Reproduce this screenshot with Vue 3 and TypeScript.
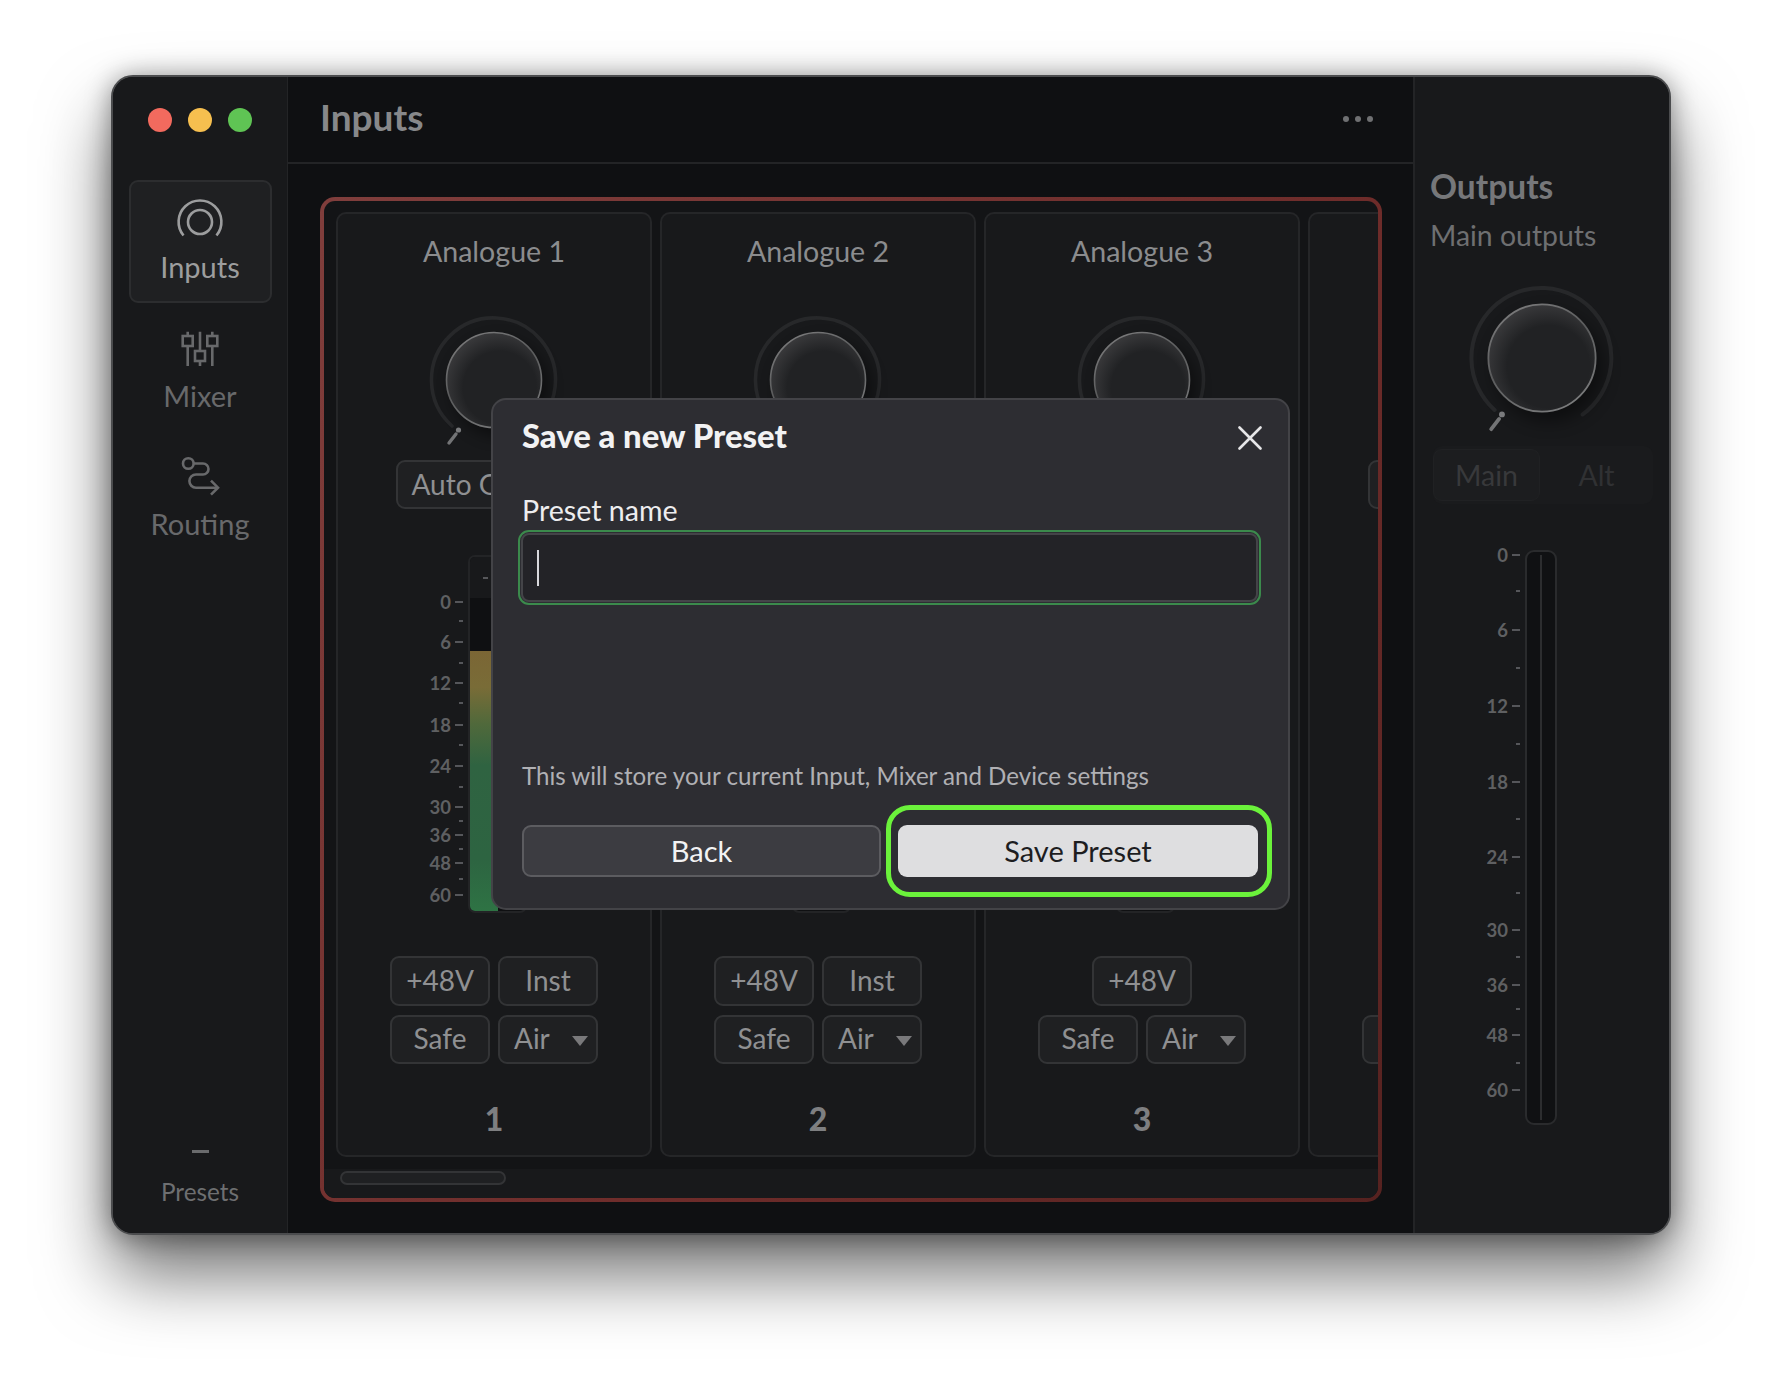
<script setup lang="ts">
interface Tick { y: number; label?: string }
interface Channel { name: string; num: number; inst: boolean; fill: boolean }

const channels: Channel[] = [
  { name: 'Analogue 1', num: 1, inst: true, fill: true },
  { name: 'Analogue 2', num: 2, inst: true, fill: false },
  { name: 'Analogue 3', num: 3, inst: false, fill: false },
  { name: 'Analogue 4', num: 4, inst: false, fill: false }
]

const channelTicks: Tick[] = [
  { y: 47, label: '0' }, { y: 66 }, { y: 87, label: '6' }, { y: 108 },
  { y: 128, label: '12' }, { y: 148 }, { y: 170, label: '18' }, { y: 190 },
  { y: 211, label: '24' }, { y: 232 }, { y: 252, label: '30' }, { y: 266 },
  { y: 280, label: '36' }, { y: 294 }, { y: 308, label: '48' }, { y: 324 },
  { y: 340, label: '60' }
]

const outputTicks: Tick[] = [
  { y: 5, label: '0' }, { y: 41 }, { y: 80, label: '6' }, { y: 118 },
  { y: 156, label: '12' }, { y: 194 }, { y: 232, label: '18' }, { y: 269 },
  { y: 307, label: '24' }, { y: 343 }, { y: 380, label: '30' }, { y: 407 },
  { y: 435, label: '36' }, { y: 459 }, { y: 485, label: '48' }, { y: 513 },
  { y: 540, label: '60' }
]
</script>

<template>
  <div class="page">
    <svg class="defs" width="0" height="0" aria-hidden="true">
      <defs>
        <radialGradient id="knobFill" cx="0.56" cy="0.58" r="0.62">
          <stop offset="0.62" stop-color="#212224" />
          <stop offset="1" stop-color="#3c3c3e" />
        </radialGradient>
        <linearGradient id="knobEdge" x1="0.2" y1="0" x2="0.75" y2="1">
          <stop offset="0" stop-color="#7c7c7d" />
          <stop offset="0.45" stop-color="#5a5b5c" />
          <stop offset="1" stop-color="#7c7d7e" />
        </linearGradient>
        <filter id="knobBlur" x="-40%" y="-40%" width="180%" height="180%">
          <feGaussianBlur stdDeviation="8" />
        </filter>
      </defs>
    </svg>

    <div class="window">
      <aside class="sidebar">
        <div class="lights">
          <span class="light red"></span>
          <span class="light yellow"></span>
          <span class="light green"></span>
        </div>
        <nav class="nav">
          <div class="nav-item active">
            <svg class="nav-icon" viewBox="0 0 48 48" fill="none">
              <circle cx="24" cy="26" r="12" />
              <path d="M7.5 39.5A21.4 21.4 0 1 1 40.5 39.5" />
            </svg>
            <span>Inputs</span>
          </div>
          <div class="nav-item">
            <svg class="nav-icon" viewBox="0 0 48 48" fill="none">
              <path d="M11.7 6.7V11M11.7 21V41M24 6.7V26M24 36V41M36.3 6.7V11M36.3 21V41" />
              <rect x="6.7" y="11" width="10" height="10" />
              <rect x="19" y="26" width="10" height="10" />
              <rect x="31.3" y="11" width="10" height="10" />
            </svg>
            <span>Mixer</span>
          </div>
          <div class="nav-item">
            <svg class="nav-icon" viewBox="0 0 48 48" fill="none">
              <circle cx="12.3" cy="10.5" r="5.3" />
              <path d="M17.6 10.5H27a5.5 5.5 0 0 1 0 11H20a6.6 6.6 0 0 0 0 13.2H42" />
              <path d="M35 27.7L42 34.7L35 41.7" />
            </svg>
            <span>Routing</span>
          </div>
        </nav>
        <div class="presets">
          <span class="presets-dash"></span>
          <span>Presets</span>
        </div>
      </aside>

      <main class="main">
        <header class="main-head">
          <h1>Inputs</h1>
          <div class="dots"><i></i><i></i><i></i></div>
        </header>
        <div class="main-body">
          <section class="frame">
            <div class="strip">
              <article v-for="ch in channels" :key="ch.num" class="channel">
                <div class="ch-title">{{ ch.name }}</div>
                <svg class="knob" viewBox="0 0 140 140" fill="none">
                  <path class="ring" d="M28 116A62 62 0 1 1 106 120" />
                  <circle cx="76" cy="78" r="48" fill="#000" opacity="0.45" filter="url(#knobBlur)" />
                  <circle cx="70" cy="70" r="47.5" fill="url(#knobFill)" stroke="url(#knobEdge)" stroke-width="1.6" />
                  <path class="tick-mark" d="M25 133L32 124" />
                  <circle cx="34.5" cy="120" r="2.6" fill="#7a7b7d" />
                </svg>
                <button class="btn auto">Auto Gain</button>
                <div class="meter">
                  <div class="scale">
                    <div
                      v-for="t in channelTicks"
                      :key="t.y"
                      class="scale-row"
                      :style="{ top: t.y + 'px' }"
                    >
                      <span v-if="t.label" class="scale-label">{{ t.label }}</span>
                      <span class="scale-dash" :class="{ minor: !t.label }"></span>
                    </div>
                  </div>
                  <div class="meter-box">
                    <div class="readout"><span></span></div>
                    <div class="well">
                      <div v-if="ch.fill" class="level"></div>
                    </div>
                  </div>
                </div>
                <div class="btn-row first">
                  <button class="btn small">+48V</button>
                  <button v-if="ch.inst" class="btn small">Inst</button>
                </div>
                <div class="btn-row">
                  <button class="btn small">Safe</button>
                  <button class="btn small air">Air<i class="caret"></i></button>
                </div>
                <div class="ch-num">{{ ch.num }}</div>
              </article>
            </div>
            <div class="scroll-band"><div class="scroll-thumb"></div></div>
          </section>
        </div>
      </main>

      <aside class="outputs">
        <h2>Outputs</h2>
        <div class="out-sub">Main outputs</div>
        <svg class="knob big" viewBox="0 0 140 140" fill="none">
          <path class="ring" d="M28 116A62 62 0 1 1 106 120" />
          <circle cx="76" cy="78" r="48" fill="#000" opacity="0.45" filter="url(#knobBlur)" />
          <circle cx="70" cy="70" r="47.5" fill="url(#knobFill)" stroke="url(#knobEdge)" stroke-width="1.6" />
          <path class="tick-mark" d="M25 133L32 124" />
          <circle cx="34.5" cy="120" r="2.6" fill="#7a7b7d" />
        </svg>
        <div class="segment">
          <div class="seg on">Main</div>
          <div class="seg">Alt</div>
        </div>
        <div class="out-meter">
          <div class="scale wide">
            <div
              v-for="t in outputTicks"
              :key="t.y"
              class="scale-row"
              :style="{ top: t.y + 'px' }"
            >
              <span v-if="t.label" class="scale-label">{{ t.label }}</span>
              <span class="scale-dash" :class="{ minor: !t.label }"></span>
            </div>
          </div>
          <div class="out-box"><span></span></div>
        </div>
      </aside>

      <div class="modal">
        <div class="modal-head">
          <h3>Save a new Preset</h3>
          <svg class="close" viewBox="0 0 24 24" fill="none">
            <path d="M1.5 1.5L22.5 22.5M22.5 1.5L1.5 22.5" />
          </svg>
        </div>
        <div class="field-label">Preset name</div>
        <div class="field-focus">
          <div class="field"><span class="text-caret"></span></div>
        </div>
        <p class="note">This will store your current Input, Mixer and Device settings</p>
        <div class="actions">
          <button class="act back">Back</button>
          <button class="act save">Save Preset</button>
        </div>
      </div>
    </div>
  </div>
</template>

<style>
html, body { margin: 0; background: #fff; }
</style>

<style scoped>
.page {
  width: 1782px;
  height: 1382px;
  box-sizing: border-box;
  padding: 75px 0 0 111px;
  background: #fff;
  overflow: hidden;
  font-family: Lato, "Noto Sans", sans-serif;
}
.defs { position: absolute; }
.window {
  position: relative;
  display: flex;
  box-sizing: border-box;
  width: 1560px;
  height: 1160px;
  border: 2px solid #4b4c4e;
  border-radius: 22px;
  background: #18191b;
  box-shadow: 0 40px 70px rgba(0, 0, 0, 0.55), 0 2px 26px rgba(0, 0, 0, 0.4);
}

/* Sidebar */
.sidebar {
  box-sizing: border-box;
  width: 175px;
  flex: none;
  display: flex;
  flex-direction: column;
  align-items: center;
  padding-top: 31px;
  border-right: 1px solid #232426;
  border-radius: 20px 0 0 20px;
  background: #18191b;
}
.lights { display: flex; gap: 16px; }
.light { width: 24px; height: 24px; border-radius: 50%; }
.red { background: #f26a5e; }
.yellow { background: #f6bf4f; }
.green { background: #5fc454; }
.nav { display: flex; flex-direction: column; gap: 5.5px; margin-top: 48px; }
.nav-item {
  box-sizing: border-box;
  width: 143px;
  height: 123px;
  display: flex;
  flex-direction: column;
  align-items: center;
  padding-top: 14px;
  border: 2px solid transparent;
  border-radius: 9px;
  color: #68696b;
  font-size: 29px;
  line-height: 36px;
}
.nav-item.active {
  background: #1f2022;
  border-color: #2c2d2f;
  color: #9c9d9e;
}
.nav-icon {
  width: 48px;
  height: 48px;
  margin-bottom: 5px;
  stroke: currentColor;
  stroke-width: 2.6;
}
.presets {
  margin-top: auto;
  margin-bottom: 25px;
  display: flex;
  flex-direction: column;
  align-items: center;
  gap: 23px;
  color: #6e6f71;
  font-size: 24.3px;
  line-height: 32px;
}
.presets-dash { width: 17px; height: 3px; background: #6a6b6d; }

/* Main */
.main {
  flex: none;
  width: 1125px;
  display: flex;
  flex-direction: column;
  background: #0f1012;
}
.main-head {
  box-sizing: border-box;
  height: 87px;
  flex: none;
  display: flex;
  align-items: center;
  justify-content: space-between;
  padding: 0 40px 6px 32px;
  border-bottom: 2px solid #232426;
}
.main-head h1 {
  margin: 0;
  color: #87888a;
  font-size: 37px;
  font-weight: 700;
}
.dots { display: flex; gap: 6px; margin-top: 5px; }
.dots i { width: 6px; height: 6px; border-radius: 50%; background: #6f7072; }
.main-body {
  flex: 1;
  min-height: 0;
  display: flex;
  padding: 33px 31px 31px 32px;
}
.frame {
  flex: 1;
  min-width: 0;
  display: flex;
  flex-direction: column;
  border: 4px solid transparent;
  border-radius: 15px;
  background:
    linear-gradient(#131416, #131416) padding-box,
    linear-gradient(125deg, #803e3c, #6e2c2a 60%, #562220) border-box;
  overflow: hidden;
}
.strip {
  flex: 1;
  min-height: 0;
  display: flex;
  gap: 8px;
  padding: 11px 0 12px 12px;
  overflow: hidden;
}
.channel {
  box-sizing: border-box;
  flex: none;
  width: 316px;
  display: flex;
  flex-direction: column;
  align-items: center;
  padding-top: 18.5px;
  border: 2px solid #252628;
  border-radius: 10px;
  background: #18191b;
}
.ch-title {
  color: #8b8c8e;
  font-size: 28.6px;
  line-height: 36px;
}
.knob { display: block; flex: none; width: 140px; height: 140px; margin-top: 41.5px; overflow: visible; }
.knob.big { width: 158px; height: 158px; margin: 26px 0 0 33px; }
.ring { stroke: #27282a; stroke-width: 3.6; stroke-linecap: round; }
.tick-mark { stroke: #737476; stroke-width: 3.4; stroke-linecap: round; }

.btn {
  box-sizing: border-box;
  border: 2px solid #333436;
  border-radius: 9px;
  background: #1f2022;
  color: #8f9092;
  font-family: inherit;
  font-size: 28px;
  padding: 0 0 2px;
}
.auto {
  width: 196px;
  height: 49px;
  margin-top: 10px;
  padding-left: 13.5px;
  text-align: left;
}
.meter {
  width: 194px;
  height: 358px;
  flex: none;
  display: flex;
  margin-top: 46px;
}
.scale { position: relative; width: 71px; flex: none; }
.scale.wide { width: 95px; }
.scale-row {
  position: absolute;
  right: 5px;
  height: 20px;
  display: flex;
  align-items: center;
  gap: 4px;
  transform: translateY(-50%);
}
.scale-label {
  color: #5f6062;
  font-size: 18.5px;
  font-weight: 700;
  line-height: 20px;
}
.scale-dash { width: 8px; height: 2px; background: #55565a; }
.scale-dash.minor { width: 4px; }
.meter-box {
  box-sizing: border-box;
  width: 59px;
  flex: none;
  display: flex;
  flex-direction: column;
  border: 2px solid #232426;
  border-radius: 7px;
  overflow: hidden;
  background: #0f1012;
}
.readout {
  height: 41px;
  flex: none;
  display: flex;
  align-items: center;
  padding-left: 13px;
  background: #18191b;
}
.readout span { width: 5px; height: 2px; background: #56575a; }
.well { flex: 1; display: flex; flex-direction: column; justify-content: flex-end; }
.level {
  width: 28px;
  height: 260px;
  background: linear-gradient(
    #7b6635 0,
    #796c37 14%,
    #50693b 28%,
    #2f6341 44%,
    #2d6441 80%,
    #2e7344 100%
  );
}
.btn-row { display: flex; justify-content: center; gap: 8px; margin-top: 9px; }
.btn-row.first { margin-top: 43px; }
.small { width: 100px; height: 49.5px; }
.air {
  position: relative;
  padding-left: 14px;
  text-align: left;
}
.caret {
  position: absolute;
  right: 8px;
  top: 19px;
  border-left: 8.5px solid transparent;
  border-right: 8.5px solid transparent;
  border-top: 10px solid #79797b;
}
.ch-num {
  margin-top: 35px;
  color: #7e7f81;
  font-size: 32px;
  font-weight: 900;
  line-height: 40px;
}
.scroll-band { height: 29px; flex: none; background: #18191b; }
.scroll-thumb {
  box-sizing: border-box;
  width: 166px;
  height: 14px;
  margin: 2px 0 0 16px;
  border: 2px solid #333436;
  border-radius: 7px;
  background: #1f2022;
}

/* Outputs */
.outputs {
  box-sizing: border-box;
  flex: 1;
  min-width: 0;
  padding: 89px 0 0 15px;
  border-left: 2px solid #232426;
  border-radius: 0 20px 20px 0;
  background: #18191b;
}
.outputs h2 {
  margin: 0;
  color: #76777a;
  font-size: 33.5px;
  font-weight: 700;
  line-height: 40px;
}
.out-sub {
  margin-top: 11px;
  color: #6e6f71;
  font-size: 28.4px;
  line-height: 36px;
}
.segment {
  box-sizing: border-box;
  width: 220px;
  height: 58px;
  display: flex;
  margin: 9px 0 0 3px;
  padding: 3px 0;
  border-radius: 9px;
  background: #1a1b1d;
}
.seg {
  flex: 1;
  display: flex;
  align-items: center;
  justify-content: center;
  color: #303133;
  font-size: 28.5px;
}
.seg.on {
  flex: none;
  width: 107px;
  color: #38393b;
  background: #1c1d1f;
  border: 1px solid #202123;
  border-radius: 9px;
  box-sizing: border-box;
}
.out-meter {
  display: flex;
  height: 575px;
  margin-top: 45.5px;
}
.out-box {
  box-sizing: border-box;
  width: 32px;
  flex: none;
  display: flex;
  justify-content: center;
  padding: 3px 0;
  border: 2px solid #2a2b2d;
  border-radius: 9px;
  background: #101113;
}
.out-box span { width: 2px; background: #2c2d2f; }

/* Modal */
.modal {
  position: absolute;
  left: 378px;
  top: 321px;
  box-sizing: border-box;
  width: 799px;
  height: 512px;
  padding: 16px 27px 0 29px;
  border: 2px solid #434347;
  border-radius: 15px;
  background: #2d2d32;
}
.modal-head {
  display: flex;
  align-items: center;
  justify-content: space-between;
}
.modal-head h3 {
  margin: 0;
  color: #f2f2f3;
  font-size: 32.8px;
  font-weight: 900;
  line-height: 40px;
}
.close {
  width: 24px;
  height: 24px;
  margin: 3px -1px 0 0;
  stroke: #e6e6e8;
  stroke-width: 2.6;
  stroke-linecap: round;
}
.field-label {
  margin-top: 38px;
  color: #ededef;
  font-size: 28.6px;
  line-height: 32px;
}
.field-focus {
  box-sizing: border-box;
  height: 75px;
  margin: 4px 0 0 -4px;
  padding: 1px;
  border: 2px solid #3b8a4c;
  border-radius: 11px;
}
.field {
  box-sizing: border-box;
  height: 100%;
  display: flex;
  align-items: center;
  padding-left: 14px;
  border: 2px solid #444448;
  border-radius: 8px;
  background: #232327;
}
.text-caret { width: 2px; height: 36px; background: #d8d8dc; }
.note {
  margin: 155px 0 0;
  color: #b0b0b4;
  font-size: 24.1px;
  line-height: 32px;
}
.actions { display: flex; gap: 17px; margin-top: 33px; }
.act {
  box-sizing: border-box;
  width: 360px;
  height: 52px;
  padding: 0 0 2px;
  border-radius: 9px;
  font-family: inherit;
  font-size: 29px;
}
.back {
  width: 359px;
  border: 2px solid #5c5c60;
  background: #3c3c41;
  color: #f2f2f3;
}
.save {
  position: relative;
  border: 0;
  background: #dedee0;
  color: #1d1d1f;
}
.save::after {
  content: "";
  position: absolute;
  top: -20px;
  bottom: -20px;
  left: -12px;
  right: -14px;
  border: 5px solid #6bf23b;
  border-radius: 24px;
}
</style>
